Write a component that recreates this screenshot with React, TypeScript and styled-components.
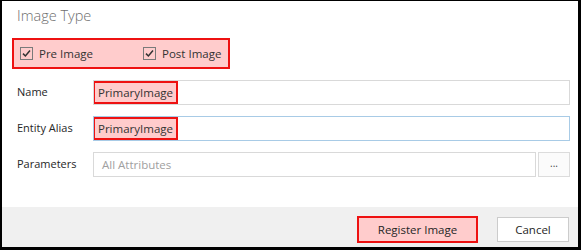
import styled, { createGlobalStyle } from 'styled-components';

const GlobalStyle = createGlobalStyle`
    html, body {
        margin: 0;
        padding: 0;
        background: #ffffff;
    }
    * {
        box-sizing: border-box;
    }
`

const Frame = styled.div`
    width: 581px;
    height: 250px;
    display: flex;
    flex-direction: column;
    border-style: solid;
    border-color: #000000;
    border-width: 1px 3px 3px 2px;
    font-family: "Open Sans", "Noto Sans", sans-serif;
    font-size: 11px;
    color: #262626;
    background: #ffffff;
`

const Body = styled.div`
    flex: 1;
    display: flex;
    flex-direction: column;
    padding: 5px 8px 0 15px;
`

const Title = styled.div`
    font-size: 14.5px;
    font-weight: 300;
    line-height: 20px;
    color: #6e6e6e;
`

// red annotation around the checkbox group
const Highlight = styled.div`
    display: flex;
    align-items: center;
    gap: 50px;
    width: 218px;
    height: 31px;
    margin: 12px 0 0 -5px;
    padding: 0 6px;
    background: #ffcccc;
    border: 2px solid #ee1111;
`

const CheckLabel = styled.label`
    display: flex;
    align-items: center;
    gap: 6px;
    white-space: nowrap;
    font-size: 11.5px;
    color: #333333;
`

const Box = styled.span`
    width: 13px;
    height: 13px;
    border: 1px solid #7a7a7a;
    display: flex;
    align-items: center;
    justify-content: center;
`

const Fields = styled.div`
    display: flex;
    flex-direction: column;
    gap: 11px;
    margin-top: 11px;
`

const Row = styled.div`
    display: flex;
    align-items: flex-start;
`

const Label = styled.div`
    width: 76px;
    padding-top: 5px;
    line-height: 14px;
    white-space: nowrap;
    color: #262626;
`

const Field = styled.div<{ focused?: boolean }>`
    flex: 1;
    height: 25px;
    display: flex;
    align-items: center;
    border: 1px solid ${({ focused }) => focused ? '#a8cbe6' : '#d9d9d9'};
    background: #ffffff;
    overflow: hidden;
`

const Marked = styled.span`
    height: 100%;
    display: flex;
    align-items: center;
    padding: 0 3px;
    margin: -1px 0 0 -1px;
    background: #ffcccc;
    border: 2px solid #ee1111;
    font-size: 11.5px;
    color: #333333;
`

const Placeholder = styled.span`
    padding-left: 8px;
    color: #a0a0a0;
    font-size: 11.5px;
`

const Browse = styled.button`
    width: 32px;
    height: 25px;
    margin-left: 2px;
    border: 1px solid #dcdcdc;
    background: #fbfbfb;
    color: #444444;
    font-family: inherit;
    font-size: 10px;
    padding: 0 0 4px;
`

const Footer = styled.div`
    height: 40px;
    display: flex;
    justify-content: flex-end;
    align-items: flex-start;
    gap: 19px;
    padding: 9px 9px 0 0;
    background: #f0f0f0;
`

const Button = styled.button<{ marked?: boolean }>`
    width: ${({ marked }) => marked ? '121px' : '72px'};
    height: ${({ marked }) => marked ? '27px' : '25px'};
    margin-top: ${({ marked }) => marked ? '0' : '1px'};
    border: ${({ marked }) => marked ? '2px solid #ee1111' : '1px solid #cccccc'};
    background: ${({ marked }) => marked ? '#ffcccc' : '#ffffff'};
    font-family: inherit;
    font-size: 11.5px;
    color: #262626;
    padding: 0;
`

const Check = () => (
    <Box>
        <svg width="9" height="9" viewBox="0 0 9 9">
            <path d="M1 4.6 L3.4 7 L8 1.6" fill="none" stroke="#333333" strokeWidth="1.5" />
        </svg>
    </Box>
)

export default function App() {
    return (
        <Frame>
            <GlobalStyle />
            <Body>
                <Title>Image Type</Title>
                <Highlight>
                    <CheckLabel><Check />Pre Image</CheckLabel>
                    <CheckLabel><Check />Post Image</CheckLabel>
                </Highlight>
                <Fields>
                    <Row>
                        <Label>Name</Label>
                        <Field><Marked>PrimaryImage</Marked></Field>
                    </Row>
                    <Row>
                        <Label>Entity Alias</Label>
                        <Field focused><Marked>PrimaryImage</Marked></Field>
                    </Row>
                    <Row>
                        <Label>Parameters</Label>
                        <Field><Placeholder>All Attributes</Placeholder></Field>
                        <Browse>...</Browse>
                    </Row>
                </Fields>
            </Body>
            <Footer>
                <Button marked>Register Image</Button>
                <Button>Cancel</Button>
            </Footer>
        </Frame>
    )
}
